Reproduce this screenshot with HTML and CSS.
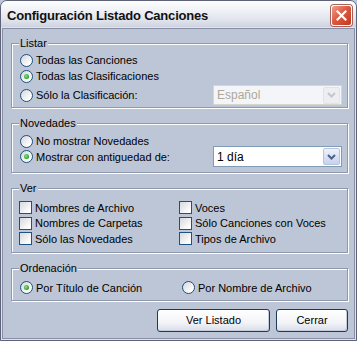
FILE: index.html
```html
<!DOCTYPE html>
<html lang="es">
<head>
    <meta charset="UTF-8">
    <title>Configuración Listado Canciones</title>
    <link rel="stylesheet" href="styles.css">
</head>
<body>
    <div class="window">
        <div class="titlebar">
            <span class="title">Configuración Listado Canciones</span>
            <span class="close-btn">
                <svg width="11" height="11" viewBox="0 0 11 11"><path d="M1.5 1.5 L9.5 9.5 M9.5 1.5 L1.5 9.5" stroke="#fff" stroke-width="2.2" stroke-linecap="square"/></svg>
            </span>
        </div>

        <div class="client">
            <!-- Listar -->
            <div class="group group-listar">
                <div class="group-title">Listar</div>
                <div class="row"><span class="radio"></span>Todas las Canciones</div>
                <div class="row"><span class="radio checked"></span>Todas las Clasificaciones</div>
                <div class="row row-select">
                    <span class="opt"><span class="radio"></span>Sólo la Clasificación:</span>
                    <div class="select disabled">
                        <span class="select-text">Español</span>
                        <span class="select-btn">
                            <svg width="9" height="6" viewBox="0 0 9 6"><path d="M1 1 L4.5 4.5 L8 1" fill="none" stroke="#c3c6cf" stroke-width="2"/></svg>
                        </span>
                    </div>
                </div>
            </div>

            <!-- Novedades -->
            <div class="group group-novedades">
                <div class="group-title">Novedades</div>
                <div class="row row-short"><span class="radio"></span>No mostrar Novedades</div>
                <div class="row row-select">
                    <span class="opt"><span class="radio checked"></span>Mostrar con antiguedad de:</span>
                    <div class="select">
                        <span class="select-text">1 día</span>
                        <span class="select-btn">
                            <svg width="9" height="6" viewBox="0 0 9 6"><path d="M1 1 L4.5 4.5 L8 1" fill="none" stroke="#4d6185" stroke-width="2"/></svg>
                        </span>
                    </div>
                </div>
            </div>

            <!-- Ver -->
            <div class="group group-ver">
                <div class="group-title">Ver</div>
                <div class="check-grid">
                    <div class="row"><span class="check"></span>Nombres de Archivo</div>
                    <div class="row"><span class="check"></span>Voces</div>
                    <div class="row"><span class="check"></span>Nombres de Carpetas</div>
                    <div class="row"><span class="check"></span>Sólo Canciones con Voces</div>
                    <div class="row"><span class="check"></span>Sólo las Novedades</div>
                    <div class="row"><span class="check"></span>Tipos de Archivo</div>
                </div>
            </div>

            <!-- Ordenación -->
            <div class="group group-orden">
                <div class="group-title">Ordenación</div>
                <div class="row-pair">
                    <div class="row"><span class="radio checked"></span>Por Título de Canción</div>
                    <div class="row"><span class="radio"></span>Por Nombre de Archivo</div>
                </div>
            </div>

            <div class="buttons">
                <button class="btn btn-ver">Ver Listado</button>
                <button class="btn btn-cerrar">Cerrar</button>
            </div>
        </div>
    </div>
</body>
</html>
```

FILE: styles.css
```css
body {
    margin: 0;
    font-family: "Liberation Sans", Arial, sans-serif;
    font-size: 11px;
    color: #000;
    background: #bdc6d6;
}

.window {
    width: 357px;
    height: 341px;
    box-sizing: border-box;
    border: 1px solid #5f6379;
    border-radius: 7px 7px 0 0;
    background: #bdc6d6;
    display: flex;
    flex-direction: column;
    overflow: hidden;
}

.titlebar {
    height: 27px;
    flex: none;
    display: flex;
    align-items: center;
    justify-content: space-between;
    padding: 0 4px 0 6px;
    background: linear-gradient(#fefefe, #eef0f5 40%, #dde1ea 75%, #cbd0dc);
}

.title {
    font-weight: bold;
    font-size: 13px;
    letter-spacing: -0.2px;
    color: #111;
    padding-top: 1px;
}

.close-btn {
    width: 19px;
    height: 19px;
    border: 1px solid #fff;
    border-radius: 3px;
    box-shadow: 0 0 0 1px #a3635a;
    background: linear-gradient(135deg, #f0a08c, #dc5a42 45%, #c1381f);
    display: flex;
    align-items: center;
    justify-content: center;
    margin-top: 1px;
}

.client {
    flex: 1;
    margin: 0 1px 1px;
    border: 1px solid #878ea6;
    box-shadow: 0 0 0 1px #dfe3ec;
    padding: 7px 6px 0 8px;
    display: flex;
    flex-direction: column;
}

.group {
    border: 1px solid #8f97ab;
    box-shadow: inset 1px 1px 0 #fff, 1px 1px 0 #fff;
    padding: 0 6px 0 7px;
    margin-top: 15px;
    display: flex;
    flex-direction: column;
}

.group:first-child {
    margin-top: 7px;
}

.group-title {
    align-self: flex-start;
    margin-top: -8px;
    padding: 0 1px;
    line-height: 14px;
    background: #bdc6d6;
}

.row {
    display: flex;
    align-items: center;
    height: 16px;
    white-space: nowrap;
}

.opt {
    display: flex;
    align-items: center;
}

.row-select {
    height: 21px;
    justify-content: space-between;
}

.radio {
    width: 11px;
    height: 11px;
    border: 1px solid #1c5180;
    border-radius: 50%;
    background: linear-gradient(135deg, #d4d6dc, #fff 80%);
    margin: 0 3px 0 1px;
    display: flex;
    align-items: center;
    justify-content: center;
    flex: none;
}

.radio.checked::after {
    content: "";
    width: 5px;
    height: 5px;
    border-radius: 50%;
    background: radial-gradient(circle at 40% 40%, #8ee58e, #21a121 70%);
}

.check {
    width: 11px;
    height: 11px;
    border: 1px solid #1c5180;
    background: linear-gradient(135deg, #d6d8de, #fff 85%);
    margin-right: 3px;
    flex: none;
}

/* Listar */
.group-listar .group-title + .row {
    margin-top: 2px;
}

.group-listar .row-select {
    margin-top: 1px;
    height: 20px;
}

.group-listar {
    padding-bottom: 2px;
}

/* Novedades */
.group-novedades .row-short {
    height: 12px;
    margin-top: 5px;
}

.group-novedades .row-select {
    margin-top: -1px;
}

.group-novedades {
    padding-bottom: 5px;
}

/* selects */
.select {
    width: 127px;
    height: 19px;
    border: 1px solid #7f9db9;
    background: #fff;
    display: flex;
    align-items: center;
    justify-content: space-between;
    margin-right: -1px;
}

.select-text {
    padding-left: 3px;
    font-size: 12px;
}

.select-btn {
    width: 15px;
    height: 15px;
    margin-right: 1px;
    border: 1px solid #b9c4dc;
    border-radius: 2px;
    background: linear-gradient(#eef2fb, #c6d2ee);
    display: flex;
    align-items: center;
    justify-content: center;
}

.select.disabled {
    border-color: #d6d8d0;
    background: #f4f5f8;
    color: #aca899;
    height: 18px;
}

.select.disabled .select-btn {
    border-color: #e2e3e6;
    background: #eceef2;
}

/* Ver */
.check-grid {
    display: grid;
    grid-template-columns: 160px 1fr;
    grid-auto-rows: 15.5px;
    margin-top: 5px;
    padding-bottom: 5px;
}

.check-grid .row {
    height: 15.5px;
}

/* Ordenación */
.row-pair {
    display: grid;
    grid-template-columns: 162px 1fr;
    margin-top: 5px;
    padding-bottom: 4px;
}

/* buttons */
.buttons {
    display: flex;
    justify-content: flex-end;
    gap: 6px;
    margin-top: 8px;
}

.btn {
    height: 23px;
    border: 1px solid #1e395b;
    border-radius: 3px;
    background: linear-gradient(#ffffff, #f3f4f8 60%, #d9dde8);
    box-shadow: inset -1px -1px 0 #c5cbdb;
    font-family: "Liberation Sans", Arial, sans-serif;
    font-size: 11px;
    color: #000;
    padding: 0;
}

.btn-ver {
    width: 113px;
}

.btn-cerrar {
    width: 72px;
}
```
